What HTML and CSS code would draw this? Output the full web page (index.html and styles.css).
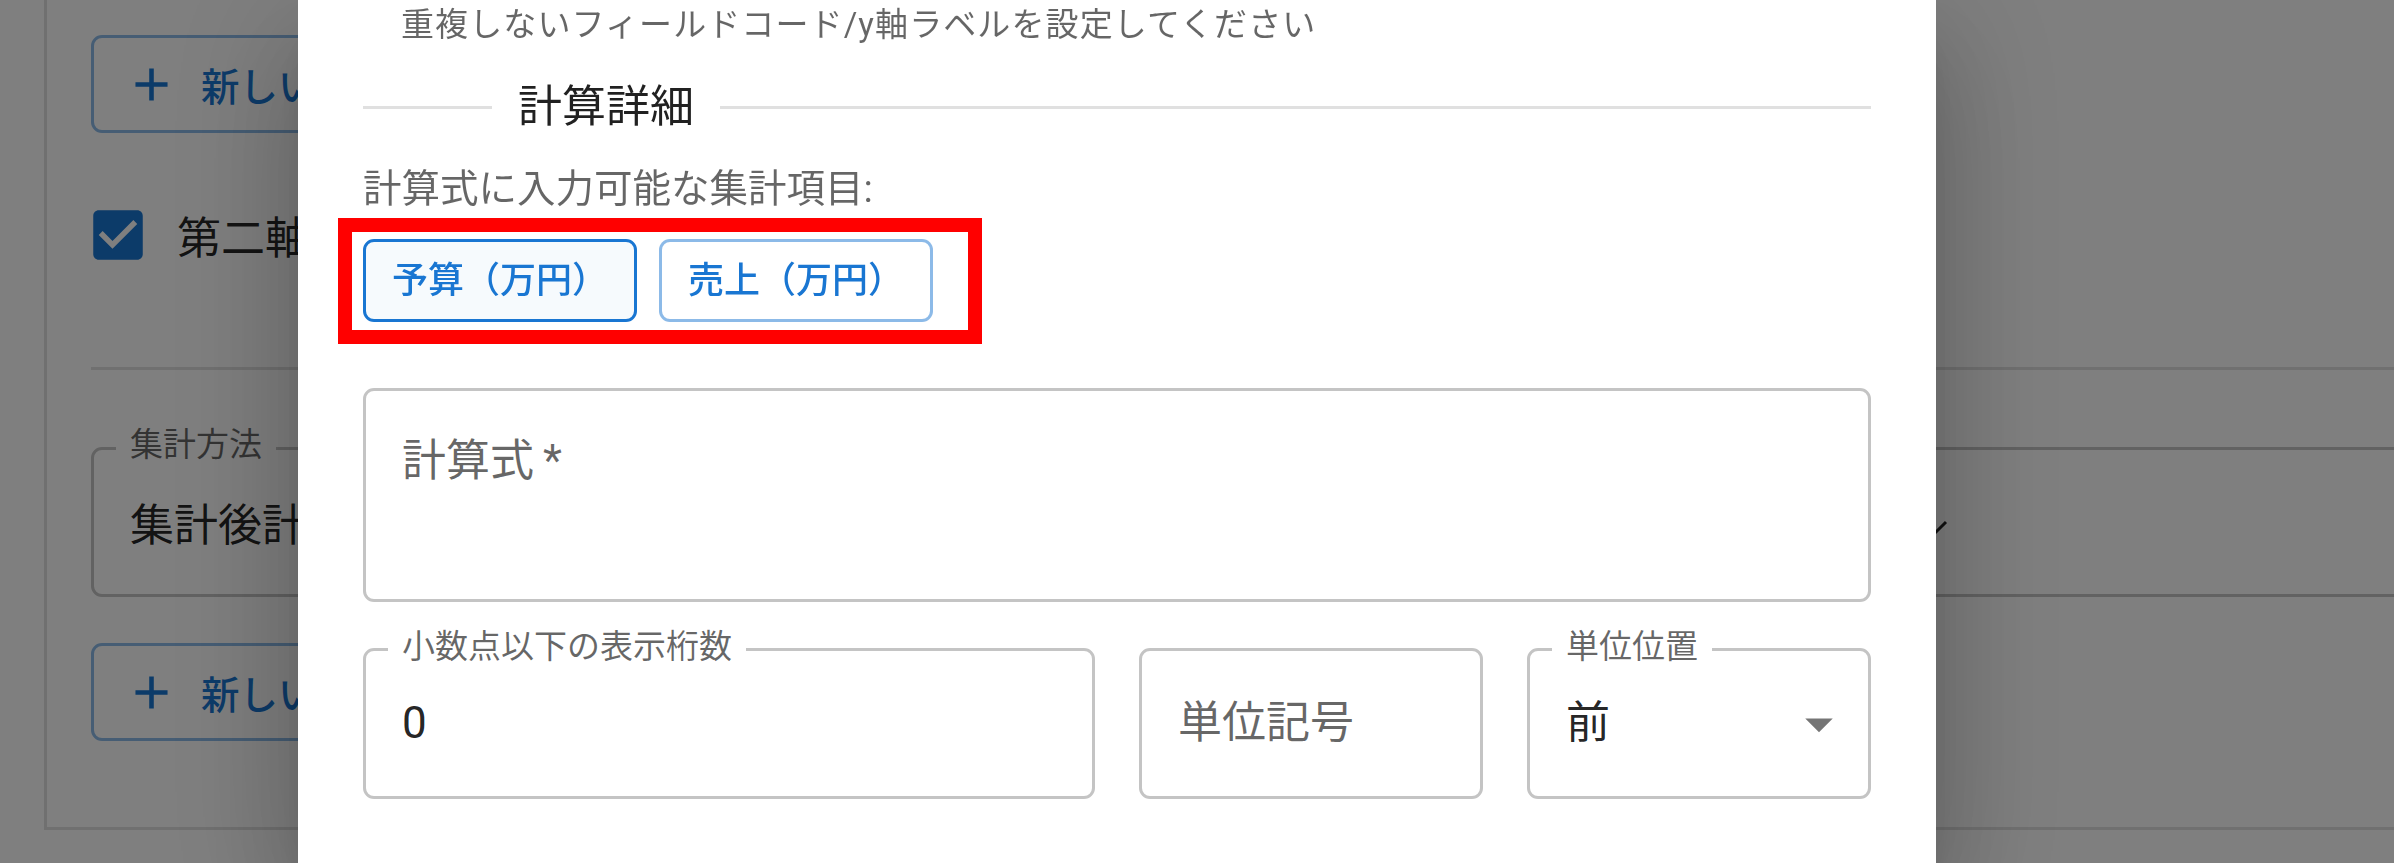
FILE: index.html
```html
<!DOCTYPE html>
<html lang="ja">
<head>
<meta charset="utf-8">
<title>計算詳細</title>
<link rel="stylesheet" href="styles.css">
</head>
<body>
<div class="page">
  <div class="card">
    <button class="bg-btn" type="button">
      <svg class="bg-btn-icon" viewBox="0 0 24 24"><path d="M19 13h-6v6h-2v-6H5v-2h6V5h2v6h6v2z"/></svg>
      <span>新しい項目</span>
    </button>
    <div class="check-row">
      <svg class="checkbox" viewBox="0 0 24 24"><path d="M19 3H5c-1.11 0-2 .9-2 2v14c0 1.1.89 2 2 2h14c1.11 0 2-.9 2-2V5c0-1.1-.89-2-2-2zm-9 14l-5-5 1.41-1.41L10 14.17l7.59-7.59L19 8l-9 9z"/></svg>
      <span class="check-label">第二軸</span>
    </div>
    <div class="bg-divider"></div>
    <div class="bg-select">
      <span class="bg-legend">集計方法</span>
      <span class="bg-value">集計後計算</span>
      <svg class="bg-chevron" viewBox="0 0 24 16"><polyline points="2,3 12,13 22,3"/></svg>
    </div>
    <button class="bg-btn second" type="button">
      <svg class="bg-btn-icon" viewBox="0 0 24 24"><path d="M19 13h-6v6h-2v-6H5v-2h6V5h2v6h6v2z"/></svg>
      <span>新しい項目</span>
    </button>
  </div>
</div>

<div class="backdrop"></div>

<div class="dialog">
  <div class="dialog-content">
    <p class="helper">重複しないフィールドコード/y軸ラベルを設定してください</p>
    <div class="section-divider">
      <span class="line-left"></span>
      <span class="divider-text">計算詳細</span>
      <span class="line-right"></span>
    </div>
    <p class="items-label">計算式に入力可能な集計項目:</p>
    <div class="chip-row">
      <button class="item-btn active" type="button">予算（万円）</button>
      <button class="item-btn" type="button">売上（万円）</button>
      <div class="annotation"></div>
    </div>
    <div class="field multiline">
      <span class="placeholder-label">計算式&thinsp;*</span>
    </div>
    <div class="field-grid">
      <div class="field small">
        <span class="legend">小数点以下の表示桁数</span>
        <span class="value">0</span>
      </div>
      <div class="field small">
        <span class="placeholder-label">単位記号</span>
      </div>
      <div class="field small">
        <span class="legend">単位位置</span>
        <span class="value">前</span>
        <svg class="dropdown" viewBox="0 0 24 24"><path d="M7 10l5 5 5-5z"/></svg>
      </div>
    </div>
  </div>
</div>
</body>
</html>
```

FILE: styles.css
```css
html, body {
  margin: 0;
  padding: 0;
  width: 2394px;
  height: 863px;
  overflow: hidden;
  background: #fff;
  font-family: Roboto, "Noto Sans CJK JP", sans-serif;
}

p { margin: 0; }

/* ---------- background page ---------- */
.page {
  width: 2394px;
  height: 863px;
  overflow: hidden;
}

.card {
  margin-left: 44px;
  width: 2600px;
  box-sizing: border-box;
  border-left: 3px solid rgba(0, 0, 0, 0.12);
  border-bottom: 3px solid rgba(0, 0, 0, 0.12);
  padding: 35px 0 86px 44px;
  display: flex;
  flex-direction: column;
  align-items: flex-start;
}

.bg-btn {
  height: 98px;
  box-sizing: border-box;
  width: 760px;
  border: 3px solid rgba(25, 118, 210, 0.5);
  border-radius: 11px;
  background: transparent;
  color: #1976d2;
  font-family: Roboto, "Noto Sans CJK JP", sans-serif;
  font-size: 38.5px;
  font-weight: 500;
  padding: 0 41px;
  display: flex;
  align-items: center;
}

.bg-btn.second { margin-top: 46px; }

.bg-btn-icon {
  width: 55px;
  height: 55px;
  margin-left: -11px;
  margin-right: 22px;
  fill: #1976d2;
  flex: none;
}

.check-row {
  margin-top: 69px;
  height: 66px;
  display: flex;
  align-items: center;
}

.checkbox {
  width: 66px;
  height: 66px;
  margin-left: -6px;
  fill: #1976d2;
}

.check-label {
  margin-left: 26px;
  font-size: 44px;
  color: rgba(0, 0, 0, 0.87);
}

.bg-divider {
  align-self: stretch;
  margin-top: 99px;
  border-top: 3px solid rgba(0, 0, 0, 0.12);
}

.bg-select {
  position: relative;
  margin-top: 77px;
  width: 2400px;
  height: 150px;
  box-sizing: border-box;
  border: 3px solid #c4c4c4;
  border-radius: 11px;
  padding-left: 36px;
  display: flex;
  align-items: center;
}

.bg-legend {
  position: absolute;
  top: -25px;
  left: 22px;
  padding: 0 14px;
  background: #fff;
  font-size: 33px;
  line-height: 40px;
  color: rgba(0, 0, 0, 0.6);
}

.bg-value {
  font-size: 44px;
  color: rgba(0, 0, 0, 0.87);
}

.bg-chevron {
  position: absolute;
  left: 1830px;
  top: 69px;
  width: 24px;
  height: 16px;
  fill: none;
  stroke: #212121;
  stroke-width: 3;
}

/* ---------- backdrop + dialog ---------- */
.backdrop {
  position: fixed;
  inset: 0;
  background: rgba(0, 0, 0, 0.5);
}

.dialog {
  position: fixed;
  left: 298px;
  top: 0;
  width: 1638px;
  height: 863px;
  background: #fff;
  overflow: hidden;
  box-shadow: 0 30px 41px -19px rgba(0, 0, 0, 0.2),
              0 66px 105px 8px rgba(0, 0, 0, 0.14),
              0 25px 127px 22px rgba(0, 0, 0, 0.12);
}

.dialog-content {
  padding: 0 65px;
  display: flex;
  flex-direction: column;
}

.helper {
  margin-left: 38px;
  font-size: 33px;
  line-height: 50px;
  letter-spacing: 1.1px;
  color: rgba(0, 0, 0, 0.6);
}

.section-divider {
  margin-top: 24px;
  height: 66px;
  display: flex;
  align-items: center;
}

.line-left,
.line-right {
  border-top: 3px solid rgba(0, 0, 0, 0.12);
}

.line-left { width: 129px; flex: none; }
.line-right { flex: 1; }

.divider-text {
  padding: 0 26px;
  font-size: 44px;
  line-height: 66px;
  color: rgba(0, 0, 0, 0.87);
}

.items-label {
  margin-top: 20px;
  font-size: 38.5px;
  line-height: 58px;
  color: rgba(0, 0, 0, 0.6);
}

.chip-row {
  position: relative;
  margin-top: 21px;
  display: flex;
  gap: 22px;
}

.item-btn {
  height: 83px;
  box-sizing: border-box;
  padding: 0 26px;
  border: 3px solid rgba(25, 118, 210, 0.5);
  border-radius: 11px;
  background: #fff;
  color: #1976d2;
  font-family: Roboto, "Noto Sans CJK JP", sans-serif;
  font-size: 36px;
  font-weight: 500;
  line-height: 1;
  display: flex;
  align-items: center;
}

.item-btn.active {
  border-color: #1976d2;
  background: #f6fafd;
}

.annotation {
  position: absolute;
  left: -25px;
  top: -21px;
  width: 644px;
  height: 126px;
  box-sizing: border-box;
  border: 14px solid #ff0000;
  pointer-events: none;
}

.field {
  position: relative;
  box-sizing: border-box;
  border: 3px solid #c4c4c4;
  border-radius: 11px;
  background: #fff;
}

.field.multiline {
  margin-top: 66px;
  height: 214px;
  padding: 39px 0 0 36px;
}

.placeholder-label {
  font-size: 44px;
  line-height: 63px;
  color: rgba(0, 0, 0, 0.6);
}

.field-grid {
  margin-top: 46px;
  display: grid;
  grid-template-columns: 732px 1fr 1fr;
  gap: 44px;
}

.field.small {
  height: 151px;
  padding-left: 36px;
  display: flex;
  align-items: center;
}

.legend {
  position: absolute;
  top: -24px;
  left: 22px;
  padding: 0 14px;
  background: #fff;
  font-size: 33px;
  line-height: 40px;
  color: rgba(0, 0, 0, 0.6);
}

.value {
  font-size: 44px;
  line-height: 63px;
  color: rgba(0, 0, 0, 0.87);
}

.dropdown {
  position: absolute;
  right: 16px;
  top: calc(50% - 33px);
  width: 66px;
  height: 66px;
  fill: rgba(0, 0, 0, 0.54);
}
```
